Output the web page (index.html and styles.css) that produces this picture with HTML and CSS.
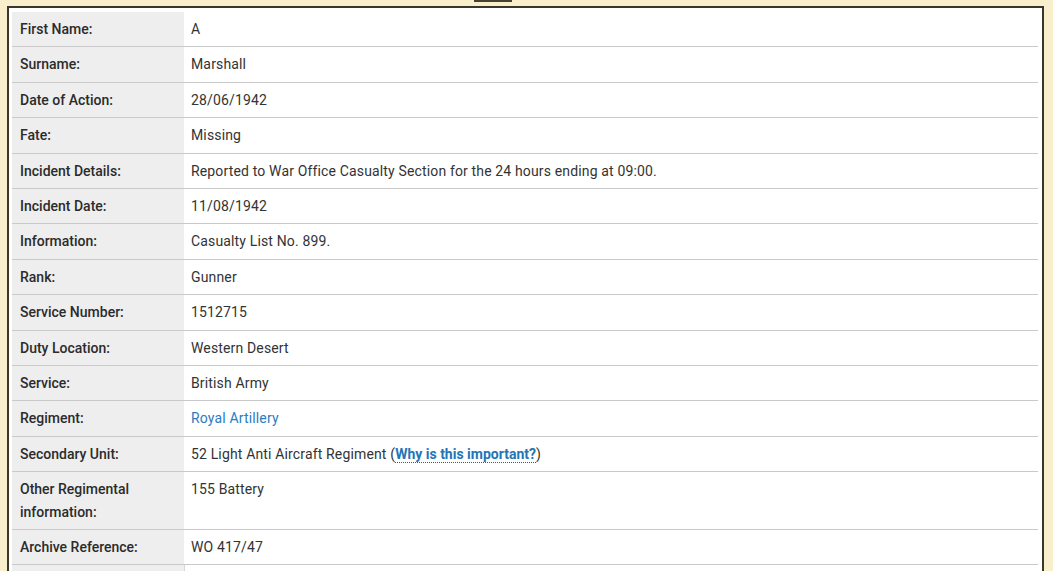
FILE: index.html
```html
<!DOCTYPE html>
<html lang="en">
<head>
<meta charset="utf-8">
<title>Casualty record</title>
<link rel="stylesheet" href="styles.css">
</head>
<body>
<div class="top-deco"></div>
<div class="panel">
  <table class="record">
    <colgroup>
      <col class="col-label">
      <col class="col-value">
    </colgroup>
    <tbody>
      <tr><th>First Name:</th><td>A</td></tr>
      <tr><th>Surname:</th><td>Marshall</td></tr>
      <tr><th>Date of Action:</th><td>28/06/1942</td></tr>
      <tr><th>Fate:</th><td>Missing</td></tr>
      <tr><th>Incident Details:</th><td>Reported to War Office Casualty Section for the 24 hours ending at 09:00.</td></tr>
      <tr><th>Incident Date:</th><td>11/08/1942</td></tr>
      <tr><th>Information:</th><td>Casualty List No. 899.</td></tr>
      <tr><th>Rank:</th><td>Gunner</td></tr>
      <tr><th>Service Number:</th><td>1512715</td></tr>
      <tr><th>Duty Location:</th><td>Western Desert</td></tr>
      <tr><th>Service:</th><td>British Army</td></tr>
      <tr><th>Regiment:</th><td><a class="link" href="#">Royal Artillery</a></td></tr>
      <tr><th>Secondary Unit:</th><td>52 Light Anti Aircraft Regiment (<a class="why" href="#">Why is this important?</a>)</td></tr>
      <tr class="tall"><th>Other Regimental information:</th><td>155 Battery</td></tr>
      <tr><th>Archive Reference:</th><td>WO 417/47</td></tr>
      <tr class="next"><th></th><td></td></tr>
    </tbody>
  </table>
</div>
</body>
</html>
```

FILE: styles.css
```css
html, body {
  margin: 0;
  padding: 0;
}
body {
  background: #f9efcd;
  font-family: Roboto, "Liberation Sans", Arial, sans-serif;
  font-size: 14px;
  color: #333333;
  overflow: hidden;
  position: relative;
}
.top-deco {
  position: absolute;
  left: 474px;
  top: 0;
  width: 38px;
  height: 2px;
  background: #4a4030;
}
.panel {
  margin: 6px 9px 0 7px;
  border: 2px solid #3b362c;
  border-bottom: none;
  background: #ffffff;
  padding: 2px 4px 0 3px;
  height: 700px;
}
.record {
  width: 100%;
  border-collapse: collapse;
  table-layout: fixed;
  margin-top: 2px;
}
.col-label {
  width: 172px;
}
.record th,
.record td {
  text-align: left;
  vertical-align: top;
  line-height: 22.5px;
  padding: 6px 8px 5.9px 8px;
  border-top: 1px solid #c9c9c9;
}
.record tr:first-child th,
.record tr:first-child td {
  border-top: none;
}
.record th {
  background: #eeeeee;
  font-weight: 500;
  color: #2b2b2b;
  padding-right: 30px;
}
.record td {
  font-weight: 400;
  padding-left: 7px;
  letter-spacing: 0.15px;
}
.record tr.next td {
  border-left: 1px solid #d6d6d6;
  height: 40px;
}
.link {
  color: #2c7cc0;
  text-decoration: none;
}
.why {
  color: #2474b8;
  font-weight: 700;
  letter-spacing: 0;
  text-decoration: none;
  border-bottom: 1px dotted #555555;
}
```
